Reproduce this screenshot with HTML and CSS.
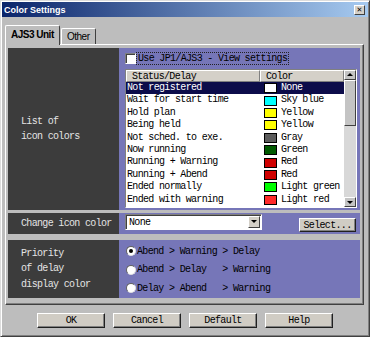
FILE: index.html
```html
<!DOCTYPE html>
<html lang="en">
<head>
    <meta charset="UTF-8">
    <title>Color Settings</title>
    <link rel="stylesheet" href="styles.css">
</head>
<body>
    <div class="window">
        <div class="titlebar">
            <span class="title">Color Settings</span>
            <span class="close">&#x2715;</span>
        </div>

        <div class="tabs">
            <div class="tab active">AJS3 Unit</div>
            <div class="tab">Other</div>
        </div>

        <div class="panel">
            <div class="section sec-list">
                <div class="side">List of<br>icon colors</div>
                <div class="main">
                    <label class="check">
                        <span class="box"></span>
                        <span class="focus">Use JP1/AJS3 - View settings</span>
                    </label>
                    <div class="listbox">
                        <div class="list">
                            <div class="head">
                                <span class="c1">Status/Delay</span>
                                <span class="c2">Color</span>
                            </div>
                            <div class="row sel"><span class="c1">Not registered</span><span class="c2"><i class="sw sw-none"></i>None</span></div>
                            <div class="row"><span class="c1">Wait for start time</span><span class="c2"><i class="sw sw-sky"></i>Sky blue</span></div>
                            <div class="row"><span class="c1">Hold plan</span><span class="c2"><i class="sw sw-yellow"></i>Yellow</span></div>
                            <div class="row"><span class="c1">Being held</span><span class="c2"><i class="sw sw-yellow"></i>Yellow</span></div>
                            <div class="row"><span class="c1">Not sched. to exe.</span><span class="c2"><i class="sw sw-gray"></i>Gray</span></div>
                            <div class="row"><span class="c1">Now running</span><span class="c2"><i class="sw sw-green"></i>Green</span></div>
                            <div class="row"><span class="c1">Running + Warning</span><span class="c2"><i class="sw sw-red"></i>Red</span></div>
                            <div class="row"><span class="c1">Running + Abend</span><span class="c2"><i class="sw sw-red"></i>Red</span></div>
                            <div class="row"><span class="c1">Ended normally</span><span class="c2"><i class="sw sw-lgreen"></i>Light green</span></div>
                            <div class="row"><span class="c1">Ended with warning</span><span class="c2"><i class="sw sw-lred"></i>Light red</span></div>
                        </div>
                        <div class="scroll">
                            <span class="sbtn up"></span>
                            <span class="thumb"></span>
                            <span class="track"></span>
                            <span class="sbtn down"></span>
                        </div>
                    </div>
                </div>
            </div>

            <div class="section sec-change">
                <div class="side">Change icon color</div>
                <div class="main">
                    <div class="combo">
                        <span class="combo-text">None</span>
                        <span class="combo-btn"></span>
                    </div>
                    <button class="btn select">Select...</button>
                </div>
            </div>

            <div class="section sec-priority">
                <div class="side">Priority<br>of delay<br>display color</div>
                <div class="main">
                    <label class="radio"><span class="dot checked"></span><span class="rtext">Abend &gt; Warning &gt; Delay</span></label>
                    <label class="radio"><span class="dot"></span><span class="rtext">Abend &gt; Delay   &gt; Warning</span></label>
                    <label class="radio"><span class="dot"></span><span class="rtext">Delay &gt; Abend   &gt; Warning</span></label>
                </div>
            </div>
        </div>

        <div class="buttons">
            <button class="btn">OK</button>
            <button class="btn">Cancel</button>
            <button class="btn">Default</button>
            <button class="btn">Help</button>
        </div>
    </div>
</body>
</html>
```

FILE: styles.css
```css
body {
    margin: 0;
    padding: 0;
    background-color: #bdbdbd;
    font-family: 'Liberation Mono', monospace;
    font-size: 10px;
    letter-spacing: -0.67px;
    color: #000;
}
.window {
    width: 370px;
    height: 337px;
    box-sizing: border-box;
    background-color: #bdbdbd;
    border: 1px solid;
    border-color: #dcdcdc #404040 #404040 #dcdcdc;
    box-shadow: inset 1px 1px #fff, inset -1px -1px #808080;
    padding: 1px;
}
.titlebar {
    height: 15px;
    display: flex;
    align-items: center;
    justify-content: space-between;
    padding: 0 3px 0 2px;
    background: linear-gradient(to right, #0a246a, #a6caf0);
}
.title {
    font-family: 'Liberation Sans', Arial, sans-serif;
    font-weight: bold;
    font-size: 9px;
    letter-spacing: 0;
    color: #fff;
}
.close {
    width: 11px;
    height: 10px;
    box-sizing: border-box;
    background-color: #d4d0c8;
    border: 1px solid;
    border-color: #fff #404040 #404040 #fff;
    font-family: 'DejaVu Sans', sans-serif;
    font-size: 7px;
    font-weight: bold;
    letter-spacing: 0;
    line-height: 8px;
    text-align: center;
}
.tabs {
    display: flex;
    align-items: flex-end;
    height: 19px;
    margin-top: 8px;
    padding-left: 3px;
}
.tab {
    font-family: 'Liberation Sans', Arial, sans-serif;
    font-size: 10px;
    letter-spacing: -0.5px;
    height: 16px;
    line-height: 16px;
    box-sizing: border-box;
    padding: 0 5px;
    border: 1px solid;
    border-color: #fff #404040 transparent #fff;
    border-bottom: none;
    border-radius: 2px 2px 0 0;
}
.tab.active {
    position: relative;
    z-index: 1;
    width: 55px;
    height: 20px;
    line-height: 18px;
    font-weight: bold;
    padding-left: 5px;
    margin-bottom: -1px;
    background-color: #bdbdbd;
}
.tab + .tab {
    width: 35px;
    margin-left: 1px;
}
.panel {
    width: 359px;
    height: 261px;
    margin-left: 3px;
    box-sizing: border-box;
    border: 1px solid;
    border-color: #fff #404040 #404040 #fff;
    box-shadow: inset -1px -1px #808080;
    padding: 3px 3px 5px 2px;
    display: flex;
    flex-direction: column;
}
.section {
    display: flex;
}
.side {
    width: 111px;
    flex-shrink: 0;
    box-sizing: border-box;
    padding-left: 13px;
    background-color: #3c3c3c;
    color: #e4e4e4;
    line-height: 15.4px;
    display: flex;
    align-items: center;
}
.main {
    flex: 1;
    background-color: #7676b8;
    padding-left: 6px;
}
.sec-list {
    height: 162px;
}
.sec-change {
    height: 21px;
    margin-top: 3px;
}
.sec-priority {
    height: 58px;
    margin-top: 6px;
}

/* check box + list */
.sec-list .main {
    padding-top: 4px;
    display: flex;
    flex-direction: column;
}
.check {
    display: flex;
    align-items: center;
    height: 12px;
}
.box {
    width: 11px;
    height: 11px;
    box-sizing: border-box;
    background-color: #fff;
    border: 1px solid;
    border-color: #808080 #fff #fff #808080;
    box-shadow: inset 1px 1px #404040;
}
.focus {
    margin-left: 1px;
    padding: 0 1px;
    line-height: 11px;
    outline: 1px dotted #222;
}
.listbox {
    display: flex;
    width: 232px;
    height: 139px;
    margin-top: 5px;
    box-sizing: border-box;
    border: 1px solid;
    border-color: #808080 #fff #fff #808080;
    background-color: #fff;
}
.list {
    width: 218px;
    overflow: hidden;
}
.head {
    display: flex;
    height: 12px;
    background-color: #d4d0c8;
}
.head span {
    box-sizing: border-box;
    height: 12px;
    line-height: 11px;
    border: 1px solid;
    border-color: #fff #808080 #808080 #fff;
}
.head .c1 {
    width: 134px;
    padding-left: 5px;
}
.head .c2 {
    flex: 1;
    padding-left: 5px;
}
.row {
    display: flex;
    height: 12.4px;
    line-height: 12.4px;
    white-space: nowrap;
}
.row .c1 {
    width: 134px;
    padding-left: 1px;
    box-sizing: border-box;
}
.row .c2 {
    flex: 1;
    display: flex;
    align-items: center;
    padding-left: 4px;
}
.row.sel {
    background-color: #0c0c4a;
    color: #fff;
}
.sw {
    width: 13px;
    height: 10px;
    box-sizing: border-box;
    border: 1px solid #000;
    margin-right: 4px;
}
.sw-none { background-color: #fff; }
.sw-sky { background-color: #00ffff; }
.sw-yellow { background-color: #ffff00; }
.sw-gray { background-color: #5c5c5c; }
.sw-green { background-color: #005a00; }
.sw-red { background-color: #d00000; }
.sw-lgreen { background-color: #00ff00; }
.sw-lred { background-color: #ff2a2a; }
.scroll {
    width: 12px;
    display: flex;
    flex-direction: column;
    background-color: #d8d8d8;
}
.sbtn, .thumb {
    box-sizing: border-box;
    background-color: #c4c4c4;
    border: 1px solid;
    border-color: #fff #404040 #404040 #fff;
    position: relative;
}
.sbtn {
    height: 10px;
}
.thumb {
    height: 46px;
}
.track {
    flex: 1;
}
.sbtn::after {
    content: "";
    position: absolute;
    left: 2px;
    top: 2px;
    border-left: 3px solid transparent;
    border-right: 3px solid transparent;
}
.up::after {
    border-bottom: 3px solid #000;
}
.down::after {
    top: 3px;
    border-top: 3px solid #000;
}

/* change icon color */
.sec-change .main {
    display: flex;
    align-items: flex-start;
}
.combo {
    width: 137px;
    height: 16px;
    margin-top: 1px;
    box-sizing: border-box;
    border: 1px solid;
    border-color: #808080 #fff #fff #808080;
    box-shadow: inset 1px 1px #404040;
    background-color: #fff;
    display: flex;
    align-items: center;
    justify-content: space-between;
    padding: 1px 1px 1px 3px;
}
.combo-btn {
    width: 12px;
    height: 12px;
    box-sizing: border-box;
    background-color: #d4d0c8;
    border: 1px solid;
    border-color: #fff #404040 #404040 #fff;
    position: relative;
}
.combo-btn::after {
    content: "";
    position: absolute;
    left: 2px;
    top: 3px;
    border-left: 3px solid transparent;
    border-right: 3px solid transparent;
    border-top: 3px solid #000;
}
.btn {
    font-family: 'Liberation Mono', monospace;
    font-size: 10px;
    letter-spacing: -0.67px;
    color: #000;
    width: 68px;
    height: 15px;
    padding: 0;
    background-color: #d0ccc4;
    border: 1px solid;
    border-color: #fff #202020 #202020 #fff;
    box-shadow: inset -1px -1px #808080;
}
.btn.select {
    width: 57px;
    height: 14px;
    margin-top: 5px;
    margin-left: auto;
    margin-right: 4px;
}

/* priority radios */
.sec-priority .main {
    padding-top: 2px;
}
.radio {
    display: flex;
    align-items: center;
    height: 18.5px;
}
.dot {
    width: 10px;
    height: 10px;
    box-sizing: border-box;
    border-radius: 50%;
    background-color: #fff;
    border: 1px solid;
    border-color: #606060 #e0e0e0 #e0e0e0 #606060;
    margin-left: 1px;
    position: relative;
}
.dot.checked::after {
    content: "";
    position: absolute;
    left: 2px;
    top: 2px;
    width: 4px;
    height: 4px;
    border-radius: 50%;
    background-color: #000;
}
.rtext {
    margin-left: 1px;
    white-space: pre;
}

.buttons {
    display: flex;
    justify-content: center;
    gap: 8px;
    margin-top: 8px;
}
```
